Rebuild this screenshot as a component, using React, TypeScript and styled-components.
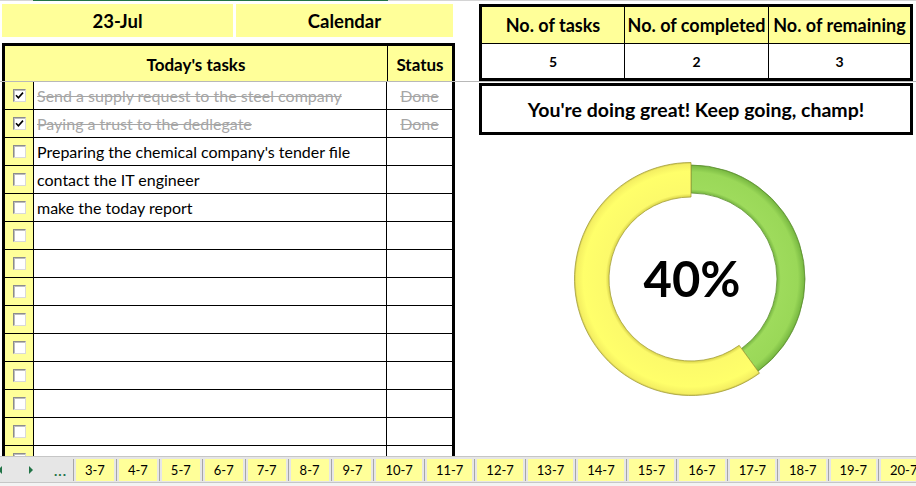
import React from "react";
import styled, { createGlobalStyle } from "styled-components";

const GlobalStyle = createGlobalStyle`
  html, body {
    margin: 0;
    padding: 0;
    background: #fff;
  }
  body {
    font-family: Lato, "Open Sans", sans-serif;
    color: #000;
  }
`;

type Task = { text: string; done: boolean };

const tasks: Task[] = [
  { text: "Send a supply request to the steel company", done: true },
  { text: "Paying a trust to the dedlegate", done: true },
  { text: "Preparing the chemical company's tender file", done: false },
  { text: "contact the IT engineer", done: false },
  { text: "make the today report", done: false },
];

const ROWS = 14;
const tabs = Array.from({ length: 18 }, (_, i) => `${i + 3}-7`);

const total = tasks.length;
const completed = tasks.filter((t) => t.done).length;
const remaining = total - completed;
const ratio = completed / total;

const Sheet = styled.div`
  width: 916px;
  height: 486px;
  display: flex;
  flex-direction: column;
  overflow: hidden;
`;

const ColumnStrip = styled.div`
  display: flex;
  height: 1px;
  flex: none;
`;

const StripPart = styled.div<{ $w?: number; $active?: boolean }>`
  width: ${(p) => (p.$w ? `${p.$w}px` : "auto")};
  flex: ${(p) => (p.$w ? "none" : "1")};
  background: ${(p) => (p.$active ? "#217346" : "#d4d4d4")};
`;

const Pane = styled.div<{ $h: number }>`
  display: flex;
  height: ${(p) => p.$h}px;
  flex: none;
  overflow: hidden;
`;

const FreezeLine = styled.div`
  height: 1px;
  flex: none;
  background: #b8b8b8;
`;

const LeftTop = styled.div`
  width: 455px;
  flex: none;
  box-sizing: border-box;
  padding: 3px 0 0 2px;
  display: flex;
  flex-direction: column;
`;

const TitleRow = styled.div`
  display: flex;
  gap: 3px;
  height: 33px;
`;

const TitleCell = styled.div<{ $w: number }>`
  width: ${(p) => p.$w}px;
  background: #ffff99;
  display: flex;
  align-items: center;
  justify-content: center;
  font-weight: 700;
  font-size: 18.5px;
`;

const TaskHead = styled.div`
  margin-top: 6px;
  flex: 1;
  display: flex;
  border: 3px solid #000;
  border-bottom: none;
  background: #ffff99;
  font-weight: 700;
  font-size: 17px;
`;

const HeadCell = styled.div<{ $w?: number }>`
  width: ${(p) => (p.$w ? `${p.$w}px` : "auto")};
  flex: ${(p) => (p.$w ? "none" : "1")};
  display: flex;
  align-items: center;
  justify-content: center;
  padding-top: 1px;
  & + & {
    border-left: 1px solid #000;
  }
`;

const RightCol = styled.div`
  margin-left: 24px;
  width: 434px;
  flex: none;
  display: flex;
  flex-direction: column;
`;

const StatsTable = styled.div`
  margin-top: 3px;
  border: 3px solid #000;
  display: grid;
  grid-template-columns: 142px 143px 1fr;
  grid-template-rows: 36px 34px;
  row-gap: 1px;
  column-gap: 1px;
  background: #000;
`;

const StatHead = styled.div`
  background: #ffff99;
  display: flex;
  align-items: center;
  justify-content: center;
  font-weight: 700;
  font-size: 18px;
  white-space: nowrap;
`;

const StatValue = styled.div`
  background: #fff;
  display: flex;
  align-items: center;
  justify-content: center;
  font-weight: 700;
  font-size: 14px;
`;

const TaskBody = styled.div`
  width: 453px;
  margin-left: 2px;
  box-sizing: border-box;
  border-left: 3px solid #000;
  border-right: 3px solid #000;
  flex: none;
  display: flex;
  flex-direction: column;
`;

const TaskRow = styled.div`
  display: flex;
  height: 28px;
  flex: none;
  box-sizing: border-box;
  border-bottom: 1px solid #000;
`;

const CheckCell = styled.div`
  width: 28px;
  flex: none;
  background: #ffff99;
  border-right: 1px solid #000;
  display: flex;
  align-items: center;
  justify-content: center;
`;

const Box = styled.div`
  width: 13px;
  height: 13px;
  box-sizing: border-box;
  border: 1px solid #8c8c8c;
  border-right-color: #d9d9d9;
  border-bottom-color: #d9d9d9;
  background: #fff;
  box-shadow: inset 1px 1px 0 #bdbdbd;
  display: flex;
  align-items: center;
  justify-content: center;
`;

const TextCell = styled.div<{ $done: boolean }>`
  width: 353px;
  flex: none;
  box-sizing: border-box;
  padding-left: 3px;
  border-right: 1px solid #000;
  display: flex;
  align-items: center;
  font-size: 16px;
  white-space: nowrap;
  overflow: hidden;
  color: ${(p) => (p.$done ? "#a6a6a6" : "#000")};
  text-decoration: ${(p) => (p.$done ? "line-through" : "none")};
`;

const StatusCell = styled.div`
  flex: 1;
  display: flex;
  align-items: center;
  justify-content: center;
  font-size: 16px;
  color: #a6a6a6;
  text-decoration: line-through;
`;

const Message = styled.div`
  margin-top: 1px;
  height: 55px;
  box-sizing: border-box;
  border: 3px solid #000;
  display: flex;
  align-items: center;
  justify-content: center;
  font-weight: 700;
  font-size: 19.5px;
`;

const ChartWrap = styled.div`
  flex: 1;
`;

const TabBar = styled.div`
  height: 30px;
  flex: none;
  box-sizing: border-box;
  border-top: 1px solid #c6c6c6;
  background: linear-gradient(
    to bottom,
    #e6e6e6 0 25px,
    #c6c6c6 25px 26px,
    #f3f3f3 26px
  );
  display: flex;
  align-items: flex-start;
  padding-top: 2px;
  overflow: hidden;
`;

const Nav = styled.div`
  width: 71px;
  height: 22px;
  flex: none;
  display: flex;
  align-items: center;
  color: #217346;
`;

const Arrow = styled.span<{ $left?: boolean }>`
  width: 0;
  height: 0;
  border-top: 4px solid transparent;
  border-bottom: 4px solid transparent;
  ${(p) =>
    p.$left
      ? "border-right: 4px solid #217346; margin-left: -2px;"
      : "border-left: 4px solid #217346; margin-left: 27px;"}
`;

const Dots = styled.span`
  margin-left: 21px;
  font-size: 14px;
  font-weight: 700;
  letter-spacing: 1px;
  padding-top: 1px;
`;

const Sep = styled.div`
  width: 1px;
  height: 22px;
  background: #a6a6a6;
  margin: 0 2px;
  flex: none;
`;

const Tab = styled.div`
  height: 22px;
  flex: none;
  padding: 0 9px;
  background: #ffff99;
  display: flex;
  align-items: center;
  font-size: 13px;
`;

function arc(cx: number, cy: number, ro: number, ri: number, a0: number, a1: number) {
  const pt = (r: number, a: number) => `${cx + r * Math.cos(a)} ${cy + r * Math.sin(a)}`;
  const large = a1 - a0 > Math.PI ? 1 : 0;
  return `M${pt(ro, a0)} A${ro} ${ro} 0 ${large} 1 ${pt(ro, a1)} L${pt(ri, a1)} A${ri} ${ri} 0 ${large} 0 ${pt(ri, a0)} Z`;
}

const Donut = ({ value }: { value: number }) => {
  const cx = 212;
  const cy = 144;
  const start = -Math.PI / 2;
  const mid = start + value * Math.PI * 2;
  return (
    <svg width="434" height="318" viewBox="0 0 434 318">
      <defs>
        <radialGradient id="yel" cx={cx} cy={cy} r="117" gradientUnits="userSpaceOnUse">
          <stop offset="0.7" stopColor="#d8d24a" />
          <stop offset="0.73" stopColor="#fcfa6a" />
          <stop offset="0.92" stopColor="#ffff6a" />
          <stop offset="0.98" stopColor="#f4ef62" />
          <stop offset="1" stopColor="#c9c048" />
        </radialGradient>
        <radialGradient id="grn" cx={cx} cy={cy} r="115" gradientUnits="userSpaceOnUse">
          <stop offset="0.74" stopColor="#6fae3c" />
          <stop offset="0.78" stopColor="#9edb5c" />
          <stop offset="0.93" stopColor="#9ad858" />
          <stop offset="0.98" stopColor="#7cbc44" />
          <stop offset="1" stopColor="#4e8a26" />
        </radialGradient>
      </defs>
      <path d={arc(cx, cy, 114, 86, start, mid)} fill="url(#grn)" stroke="#5d8f2e" strokeWidth="0.8" />
      <path d={arc(cx, cy, 116.5, 82, mid, start + Math.PI * 2)} fill="url(#yel)" stroke="#a59f3a" strokeWidth="0.8" />
      <text
        x={cx + 1}
        y={cy + 18}
        textAnchor="middle"
        fontFamily="Lato, sans-serif"
        fontWeight="700"
        fontSize="49"
        fill="#000"
      >
        {Math.round(value * 100)}%
      </text>
    </svg>
  );
};

const Check = () => (
  <svg width="9" height="9" viewBox="0 0 9 9">
    <path d="M1 4.2 L3.4 6.8 L8 1.6" fill="none" stroke="#000" strokeWidth="1.6" />
  </svg>
);

export default function App() {
  const rows = Array.from({ length: ROWS }, (_, i) => tasks[i]);
  return (
    <>
      <GlobalStyle />
      <Sheet>
        <ColumnStrip>
          <StripPart $w={33} />
          <StripPart $w={355} $active />
          <StripPart />
        </ColumnStrip>

        <Pane $h={80}>
          <LeftTop>
            <TitleRow>
              <TitleCell $w={231}>23-Jul</TitleCell>
              <TitleCell $w={217}>Calendar</TitleCell>
            </TitleRow>
            <TaskHead>
              <HeadCell>Today's tasks</HeadCell>
              <HeadCell $w={64}>Status</HeadCell>
            </TaskHead>
          </LeftTop>
          <RightCol>
            <StatsTable>
              <StatHead>No. of tasks</StatHead>
              <StatHead>No. of completed</StatHead>
              <StatHead>No. of remaining</StatHead>
              <StatValue>{total}</StatValue>
              <StatValue>{completed}</StatValue>
              <StatValue>{remaining}</StatValue>
            </StatsTable>
          </RightCol>
        </Pane>

        <FreezeLine />

        <Pane $h={374}>
          <TaskBody>
            {rows.map((t, i) => (
              <TaskRow key={i}>
                <CheckCell>
                  <Box>{t?.done && <Check />}</Box>
                </CheckCell>
                <TextCell $done={!!t?.done}>{t?.text}</TextCell>
                <StatusCell>{t?.done ? "Done" : ""}</StatusCell>
              </TaskRow>
            ))}
          </TaskBody>
          <RightCol>
            <Message>You're doing great! Keep going, champ!</Message>
            <ChartWrap>
              <Donut value={ratio} />
            </ChartWrap>
          </RightCol>
        </Pane>

        <TabBar>
          <Nav>
            <Arrow $left />
            <Arrow />
            <Dots>...</Dots>
          </Nav>
          {tabs.map((t) => (
            <React.Fragment key={t}>
              <Sep />
              <Tab>{t}</Tab>
            </React.Fragment>
          ))}
        </TabBar>
      </Sheet>
    </>
  );
}
